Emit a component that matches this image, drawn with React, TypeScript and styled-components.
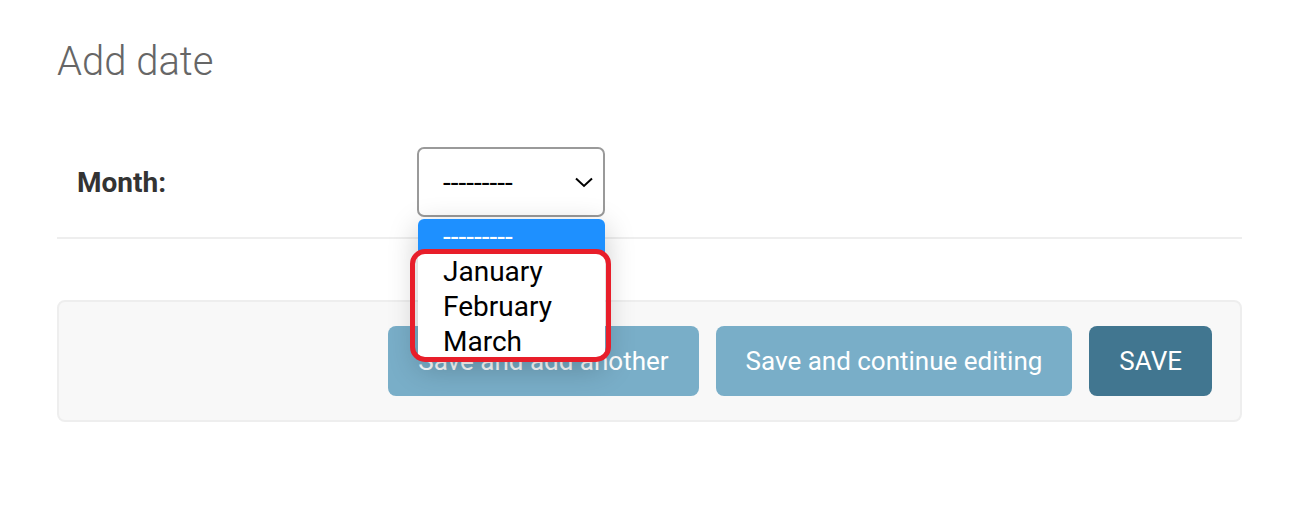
import React from 'react'
import styled, { createGlobalStyle } from 'styled-components'

const GlobalStyle = createGlobalStyle`
  html, body {
    margin: 0;
    padding: 0;
    background: #ffffff;
  }
  body {
    font-family: Roboto, "Liberation Sans", Arial, sans-serif;
    color: #333333;
  }
`

const Content = styled.main`
  padding: 37px 59px 40px 57px;
`

const Title = styled.h1`
  margin: 0 0 40px;
  font-size: 40px;
  font-weight: 300;
  line-height: 50px;
  color: #666666;
`

const Fieldset = styled.fieldset`
  margin: 0;
  padding: 0;
  border: none;
`

const FormRow = styled.div`
  display: flex;
  align-items: center;
  padding: 20px 20px;
  border-bottom: 2px solid #eeeeee;
`

const Label = styled.label`
  width: 340px;
  font-size: 28px;
  font-weight: 700;
  color: #333333;
`

const SelectWrap = styled.div`
  position: relative;
`

const SelectBox = styled.div`
  box-sizing: border-box;
  width: 188px;
  height: 70px;
  display: flex;
  align-items: center;
  justify-content: space-between;
  padding: 0 7px 0 24px;
  border: 2px solid #9a9a9a;
  border-radius: 7px;
  background: #ffffff;
  font-size: 28px;
  color: #000000;
`

const Chevron = styled.svg`
  width: 24px;
  height: 24px;
  flex: none;
`

const Dropdown = styled.ul`
  position: absolute;
  top: 72px;
  left: 1px;
  width: 187px;
  margin: 0;
  padding: 0 0 1px;
  list-style: none;
  background: #ffffff;
  border-radius: 6px;
  box-shadow: 0 8px 30px rgba(0, 0, 0, 0.22);
  overflow: hidden;
  z-index: 5;
`

const Option = styled.li<{ $selected?: boolean }>`
  padding: 0 0 0 25px;
  height: 35px;
  line-height: 35px;
  font-size: 28px;
  color: ${({ $selected }) => ($selected ? '#ffffff' : '#000000')};
  background: ${({ $selected }) => ($selected ? '#1e90ff' : '#ffffff')};
`

const Highlight = styled.div`
  position: absolute;
  top: 102px;
  left: -7px;
  width: 201px;
  height: 113px;
  box-sizing: border-box;
  border: 5px solid #e81e2a;
  border-radius: 15px;
  z-index: 6;
  pointer-events: none;
`

const SubmitRow = styled.div`
  margin-top: 61px;
  display: flex;
  justify-content: flex-end;
  gap: 17px;
  padding: 24px 28px;
  background: #f8f8f8;
  border: 2px solid #eeeeee;
  border-radius: 8px;
`

const Button = styled.button<{ $primary?: boolean }>`
  height: 70px;
  padding: 0 30px;
  border: none;
  border-radius: 8px;
  font-family: Roboto, "Liberation Sans", Arial, sans-serif;
  font-size: 26px;
  color: #ffffff;
  background: ${({ $primary }) => ($primary ? '#417690' : '#79aec8')};
  cursor: pointer;
`

export default function App() {
  return (
    <>
      <GlobalStyle />
      <Content>
        <Title>Add date</Title>
        <Fieldset>
          <FormRow>
            <Label>Month:</Label>
            <SelectWrap>
              <SelectBox>
                <span>---------</span>
                <Chevron viewBox="0 0 24 24" fill="none" stroke="#000" strokeWidth="2">
                  <path d="M4 8.5l8 7.5 8-7.5" />
                </Chevron>
              </SelectBox>
              <Dropdown>
                <Option $selected>---------</Option>
                <Option>January</Option>
                <Option>February</Option>
                <Option>March</Option>
              </Dropdown>
              <Highlight />
            </SelectWrap>
          </FormRow>
        </Fieldset>
        <SubmitRow>
          <Button>Save and add another</Button>
          <Button>Save and continue editing</Button>
          <Button $primary>SAVE</Button>
        </SubmitRow>
      </Content>
    </>
  )
}
